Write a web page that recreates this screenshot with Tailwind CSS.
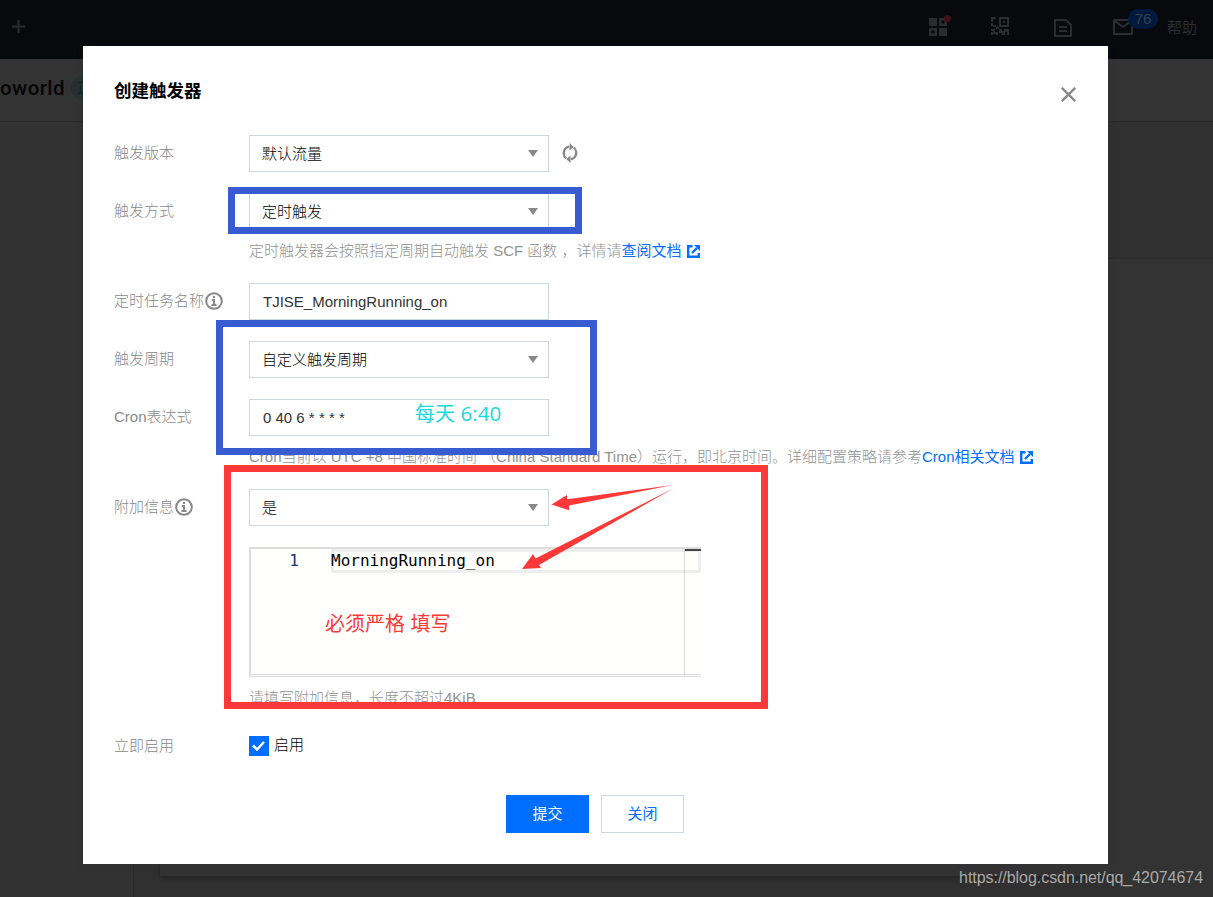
<!DOCTYPE html>
<html lang="zh-CN">
<head>
    <meta charset="UTF-8">
    <meta name="viewport" content="width=device-width, initial-scale=1.0">
    <title>创建触发器</title>
    <script src="https://cdn.jsdelivr.net/npm/@tailwindcss/browser@4"></script>
    <style>
        body { font-family: 'Liberation Sans', 'Noto Sans CJK SC', sans-serif; }
    </style>
</head>
<body class="relative h-[897px] w-[1213px] overflow-hidden bg-[#303030] text-[15px]">
    <!-- Page behind the dialog -->
    <div class="flex h-full flex-col">
        <header class="flex h-[59px] shrink-0 items-center justify-between bg-[#07090d] pr-4 pl-3 text-[#2b2c2f]">
            <svg class="mb-1.5 size-[13px]" viewBox="0 0 13 13" stroke="currentColor" stroke-width="2"><path d="M0 6.5h13M6.5 0v13"/></svg>
            <div class="flex items-center">
                <div class="relative mr-[44px] mb-[5px]">
                    <svg class="size-[18px]" viewBox="0 0 18 18" fill="currentColor" fill-rule="evenodd"><path d="M0 0h8v8H0zM10 0h8v8h-8zM12.500 2.500v3h3v-3zM0 10h8v8H0zM2.500 12.500v3h3v-3zM10 10h8v8h-8z"/></svg>
                    <span class="absolute -top-[3px] left-[15px] size-[7px] rounded-full bg-[#421113]"></span>
                </div>
                <svg class="mr-[45px] mb-[7px] size-[18px]" viewBox="0 0 18 18" fill="currentColor" fill-rule="evenodd"><path d="M0 0h5v2H2v3H0zM0 6h2v2h3v2H2v-1H0zM8 0h10v10H8zM10 2v6h6V2zM12 4h2v2h-2zM5 10h3v2H5zM0 12h4v3h3v3H5v-1H2v1H0v-3h2v-1H0zM8 12h3v2h2v-2h5v6h-2v-3h-2v3h-3v-2H8z"/></svg>
                <svg class="mr-[41px] mb-[3px] h-[18px] w-[18px]" viewBox="0 0 18 18" fill="none" stroke="currentColor" stroke-width="2"><path d="M1 1h11l5 5v11H1zM5 8h8M5 12h8"/></svg>
                <div class="relative mr-[34px] mb-[5px]">
                    <svg class="h-4 w-5" viewBox="0 0 20 16" fill="none" stroke="currentColor" stroke-width="2"><path d="M1 1h18v14H1zM2 2l8 6 8-6"/></svg>
                    <span class="absolute -top-[10px] left-[15px] flex h-5 w-[30px] items-center justify-center rounded-full bg-[#001a3d] text-[15px] text-[#34414f]">76</span>
                </div>
                <span class="-mt-0.5 text-[15px]">帮助</span>
            </div>
        </header>
        <div class="flex h-[63px] shrink-0 items-center border-b border-[#292929] bg-[#333]">
            <span class="w-[71px] pb-[3px] font-[Roboto] text-[20.5px] font-medium tracking-[0.4px] text-[#050505]">oworld</span>
            <span class="mb-1 h-[24px] w-[60px] rounded-full bg-[#26302f] pl-1.5 text-[14px] leading-[24px] text-[#0b2a20]">正常</span>
        </div>
        <div class="flex flex-1">
            <div class="w-[134px] border-r border-[#292929] bg-[#323232]"></div>
            <div class="flex flex-1 flex-col">
                <div class="h-[137px] border-b border-[#2d2d2d]"></div>
                <div class="flex-1 pl-[26px]">
                    <div class="h-[617px] w-[960px] bg-[#333] shadow-[0_2px_4px_#222]"></div>
                </div>
            </div>
            <div class="w-[93px] bg-[#333]"><div class="h-[137px] border-b border-[#2d2d2d] bg-[#303030]"></div></div>
        </div>
    </div>
    <span class="absolute right-[10px] bottom-[8px] text-[16px] leading-[22px] tracking-[-0.05px] text-[#aaa]">https://blog.csdn.net/qq_42074674</span>

    <!-- Dialog -->
    <div class="absolute top-[46px] left-[83px] h-[818px] w-[1025px] bg-white px-[31px] pt-[34px] shadow-[0_2px_6px_#33343d55]">
        <div class="flex items-start justify-between">
            <h1 class="text-[17.5px] leading-[22px] font-bold text-black">创建触发器</h1>
            <svg class="mt-[7px] mr-px size-[15px]" viewBox="0 0 15 15" stroke="#888" stroke-width="2.300"><path d="M.8 .8l13.400 13.400M14.200 .8L.8 14.200"/></svg>
        </div>
        <div class="mt-[33px] flex flex-col font-light text-[#888]">
            <div class="flex h-[37px] items-center">
                <span class="w-[135px]">触发版本</span>
                <div class="flex h-full w-[300px] items-center justify-between border border-[#cfd5de] pr-2.5 pl-3 text-black">
                    <span class="pt-px">默认流量</span>
                    <svg class="h-[7px] w-[10px]" viewBox="0 0 10 7" fill="#888"><path d="M0 0h10L5 7z"/></svg>
                </div>
                <svg class="mb-px ml-[13px] h-5 w-4" viewBox="0 0 16 20" fill="none" stroke="#888" stroke-width="2.300"><path d="M4.200 15.400A6.700 6.700 0 0 1 7 3.700M11.800 4.600A6.700 6.700 0 0 1 9 16.300"/><path d="M7.500 0v7.600L11.800 4zM8.500 12.400V20L4.200 16z" fill="#888" stroke="none"/></svg>
            </div>
            <div class="mt-[21px] flex h-[37px] items-center">
                <span class="w-[135px]">触发方式</span>
                <div class="flex h-full w-[300px] items-center justify-between border border-[#cfd5de] pr-2.5 pl-3 text-black">
                    <span class="pt-px">定时触发</span>
                    <svg class="h-[7px] w-[10px]" viewBox="0 0 10 7" fill="#888"><path d="M0 0h10L5 7z"/></svg>
                </div>
            </div>
            <p class="mt-[10px] ml-[135px] flex h-[22px] items-center whitespace-pre text-[#929292]">定时触发器会按照指定周期自动触发 SCF 函数 ，详情请<a class="font-normal text-[#006eff]">查阅文档</a><svg class="ml-[5px] size-[13px]" viewBox="0 0 13 13" fill="none" stroke="#006eff" stroke-width="2.400"><path d="M5.500 1.200H1.200v10.600h10.600V8M5 8l5-5"/><path d="M7 0h6v6z" fill="#006eff" stroke="none"/></svg></p>
            <div class="mt-[21px] flex h-[37px] items-center">
                <span class="flex w-[135px] items-center">定时任务名称<svg class="mb-px ml-px size-[18px]" viewBox="0 0 18 18" fill="none" stroke="#888" stroke-width="2"><circle cx="9" cy="9" r="7.800"/><path d="M6.800 8h2.200v5M6.500 13h5M8 5h2"/></svg></span>
                <div class="flex h-full w-[300px] items-center border border-[#cfd5de] pt-px pl-[13px] text-[#333]">TJISE_MorningRunning_on</div>
            </div>
            <div class="mt-[21px] flex h-[37px] items-center">
                <span class="w-[135px]">触发周期</span>
                <div class="flex h-full w-[300px] items-center justify-between border border-[#cfd5de] pr-2.5 pl-3 text-black">
                    <span class="pt-px">自定义触发周期</span>
                    <svg class="h-[7px] w-[10px]" viewBox="0 0 10 7" fill="#888"><path d="M0 0h10L5 7z"/></svg>
                </div>
            </div>
            <div class="mt-[21px] flex h-[37px] items-center">
                <span class="w-[135px]">Cron表达式</span>
                <div class="flex h-full w-[300px] items-center border border-[#cfd5de] pt-px pl-[13px] text-[#333]">0 40 6 * * * *</div>
            </div>
            <p class="mt-[10px] ml-[135px] flex h-[22px] items-center whitespace-pre text-[#929292]">Cron当前以 UTC +8 中国标准时间 （China Standard Time）运行，即北京时间。详细配置策略请参考<a class="font-normal text-[#006eff]">Cron相关文档</a><svg class="ml-[5px] size-[13px]" viewBox="0 0 13 13" fill="none" stroke="#006eff" stroke-width="2.400"><path d="M5.500 1.200H1.200v10.600h10.600V8M5 8l5-5"/><path d="M7 0h6v6z" fill="#006eff" stroke="none"/></svg></p>
            <div class="mt-[21px] flex h-[37px] items-center">
                <span class="flex w-[135px] items-center">附加信息<svg class="mb-px ml-px size-[18px]" viewBox="0 0 18 18" fill="none" stroke="#888" stroke-width="2"><circle cx="9" cy="9" r="7.800"/><path d="M6.800 8h2.200v5M6.500 13h5M8 5h2"/></svg></span>
                <div class="flex h-full w-[300px] items-center justify-between border border-[#cfd5de] pr-2.5 pl-3 text-black">
                    <span class="pt-px">是</span>
                    <svg class="h-[7px] w-[10px]" viewBox="0 0 10 7" fill="#888"><path d="M0 0h10L5 7z"/></svg>
                </div>
            </div>
            <!-- Code editor -->
            <div class="relative mt-[21px] ml-[135px] h-[130px] w-[452px] border-t-2 border-b border-l border-[#ddd] bg-white">
                <div class="h-[126px] border-b border-l border-[#ddd] bg-[#fffffe]">
                    <div class="flex h-6 font-['DejaVu_Sans_Mono'] text-[16px] leading-[23px] font-normal">
                        <span class="w-[80px] pr-[32px] text-right text-[#237]">1</span>
                        <span class="flex-1 border-[3px] border-[#eee] leading-[17px] text-black"><span class="-ml-[3px]">MorningRunning_on</span></span>
                    </div>
                </div>
                <div class="absolute top-0 right-0 h-[126px] w-[17px] border-l border-black/15">
                    <div class="h-0.5 bg-[#444]"></div>
                </div>
            </div>
            <p class="mt-[10px] ml-[135px] h-[22px] leading-[22px] text-[#929292]">请填写附加信息，长度不超过4KiB</p>
            <div class="mt-[26px] flex h-[22px] items-center">
                <span class="w-[135px]">立即启用</span>
                <span class="flex size-5 items-center justify-center bg-[#006eff]"><svg class="mr-0.5 h-[10px] w-[13px]" viewBox="0 0 13 10" fill="none" stroke="#fff" stroke-width="2.500"><path d="M1 4.500l4 4L12 1"/></svg></span>
                <span class="-mt-px ml-[5px] text-black">启用</span>
            </div>
            <div class="mt-[38px] ml-[392px] flex gap-3 font-normal">
                <button class="h-[38px] w-[83px] bg-[#006eff] pt-px text-white">提交</button>
                <button class="h-[38px] w-[83px] border border-[#cfd5de] pt-px text-[#006eff]">关闭</button>
            </div>
        </div>
    </div>

    <!-- Annotations drawn over the dialog -->
    <div class="absolute top-[187px] left-[228px] h-[47px] w-[354px] border-[7px] border-[#385bd2]"></div>
    <div class="absolute top-[320px] left-[216px] h-[135px] w-[381px] border-[7px] border-[#385bd2]"></div>
    <div class="absolute top-[465px] left-[224px] h-[244px] w-[544px] border-[7px] border-[#fc3938]"></div>
    <svg class="absolute top-[480px] left-[515px] h-[95px] w-[165px]" viewBox="515 480 165 95" fill="#fc3938">
        <path d="M551.500 504.500L567 495v4.300L673 485 569 505.500v4.800z"/>
        <path d="M522 569l11-15 2.500 4.500L674 488 539 565l2 3z"/>
    </svg>
    <span class="absolute top-[400px] left-[415px] text-[20px] leading-[26px] whitespace-nowrap text-[#18d9dc]">每天 <span class="font-['Open_Sans'] text-[20.5px]">6:40</span></span>
    <span class="absolute top-[611px] left-[325px] text-[20px] leading-[26px] whitespace-nowrap text-[#fc3938]">必须严格 填写</span>
</body>
</html>
